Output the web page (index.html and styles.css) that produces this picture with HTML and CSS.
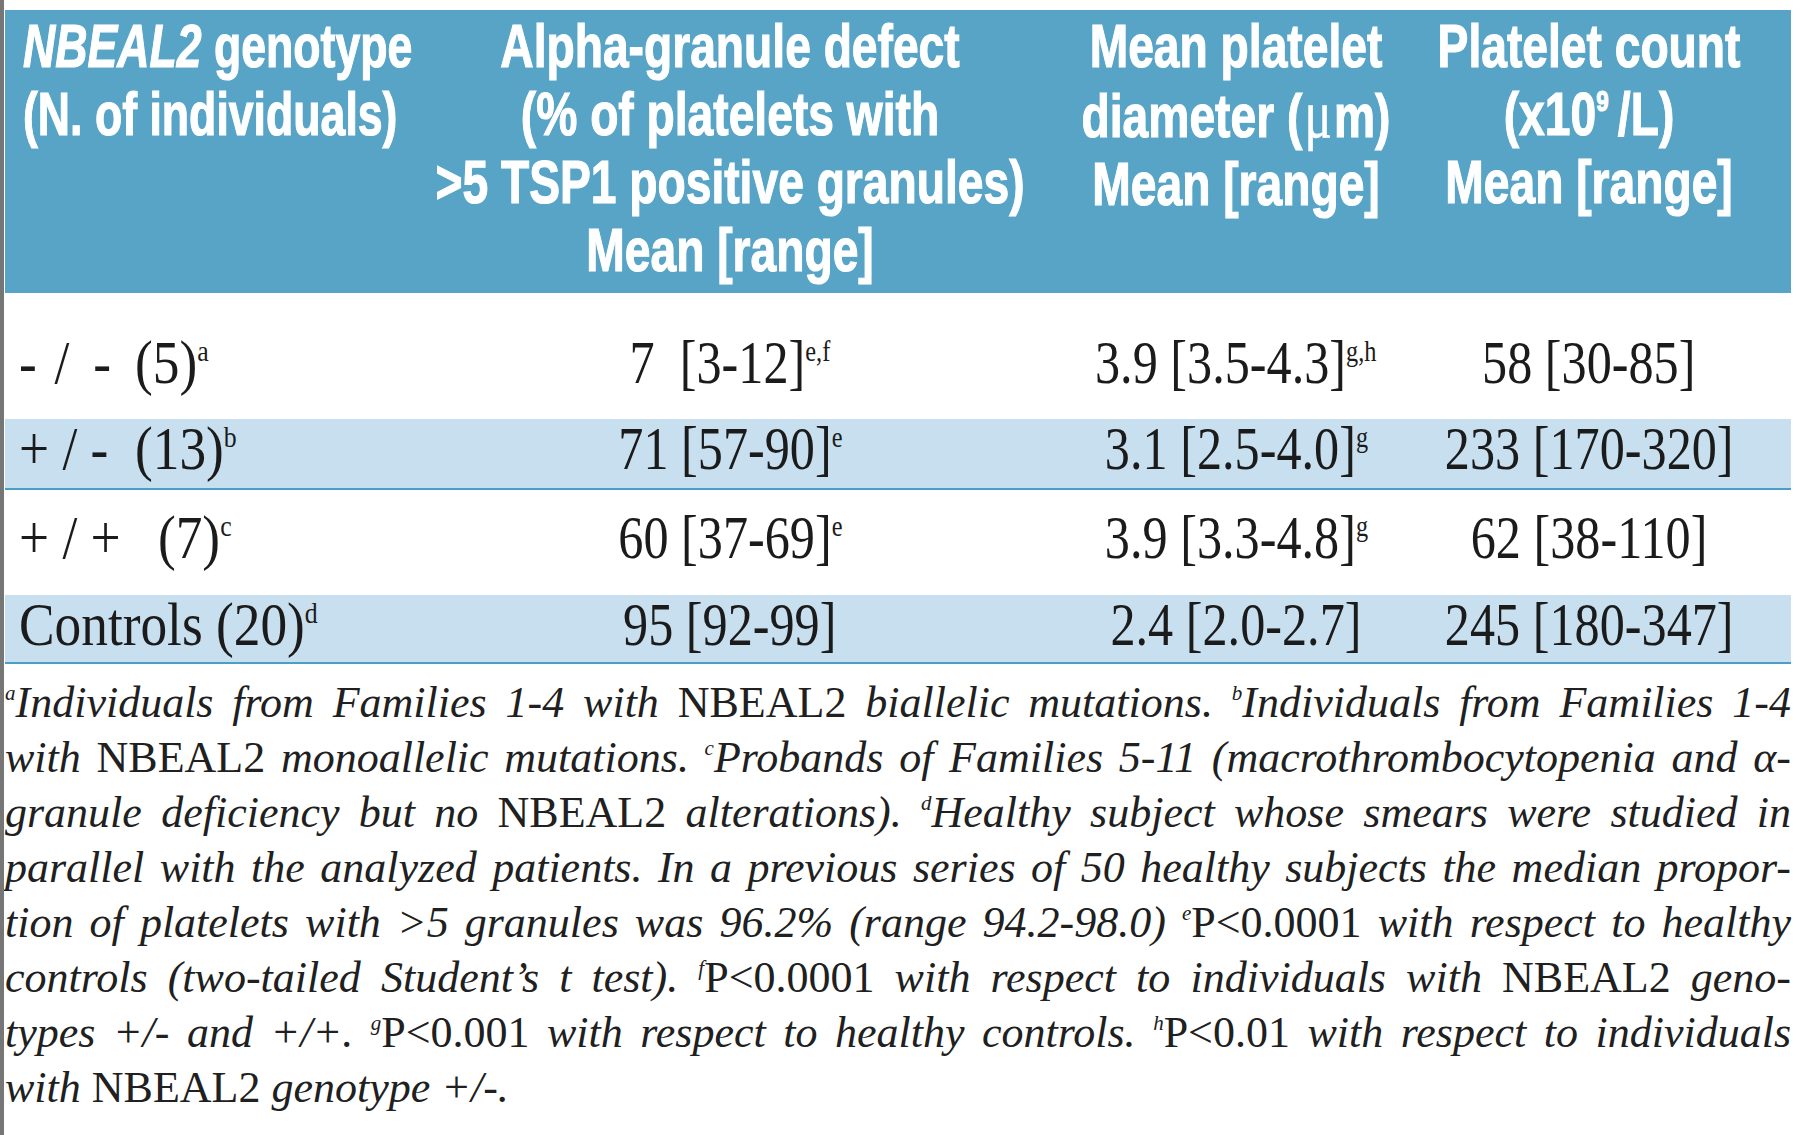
FILE: index.html
```html
<!DOCTYPE html>
<html lang="en">
<head>
<meta charset="utf-8">
<title>NBEAL2 genotype table</title>
<link rel="stylesheet" href="styles.css">
</head>
<body>
<div class="page">
  <div class="tbl">
    <div class="row head">
      <div class="cell c1"><div class="sq"><span><i>NBEAL2</i> genotype</span><span>(N. of individuals)</span></div></div>
      <div class="cell"><div class="sq"><span>Alpha-granule defect</span><span>(% of platelets with</span><span>&gt;5 TSP1 positive granules)</span><span>Mean [range]</span></div></div>
      <div class="cell"><div class="sq"><span>Mean platelet</span><span>diameter (<span class="mu">&mu;</span>m)</span><span>Mean [range]</span></div></div>
      <div class="cell"><div class="sq"><span>Platelet count</span><span>(x10<sup>9</sup>&thinsp;/L)</span><span>Mean [range]</span></div></div>
    </div>
    <div class="row body r1">
      <div class="cell c1"><span>-&nbsp;&#8202;/&nbsp;&thinsp;-&nbsp;&thinsp;(5)<sup>a</sup></span></div>
      <div class="cell"><span>7&nbsp;&nbsp;[3-12]<sup>e,f</sup></span></div>
      <div class="cell"><span>3.9 [3.5-4.3]<sup>g,h</sup></span></div>
      <div class="cell"><span>58 [30-85]</span></div>
    </div>
    <div class="row body r2 alt">
      <div class="cell c1"><span>+&nbsp;/&nbsp;-&nbsp;&nbsp;(13)<sup>b</sup></span></div>
      <div class="cell"><span>71 [57-90]<sup>e</sup></span></div>
      <div class="cell"><span>3.1 [2.5-4.0]<sup>g</sup></span></div>
      <div class="cell"><span>233 [170-320]</span></div>
    </div>
    <div class="row body r3">
      <div class="cell c1"><span>+&nbsp;/&nbsp;+&nbsp;&nbsp;&thinsp;(7)<sup>c</sup></span></div>
      <div class="cell"><span>60 [37-69]<sup>e</sup></span></div>
      <div class="cell"><span>3.9 [3.3-4.8]<sup>g</sup></span></div>
      <div class="cell"><span>62 [38-110]</span></div>
    </div>
    <div class="row body r4 alt">
      <div class="cell c1"><span>Controls (20)<sup>d</sup></span></div>
      <div class="cell"><span>95 [92-99]</span></div>
      <div class="cell"><span>2.4 [2.0-2.7]</span></div>
      <div class="cell"><span>245 [180-347]</span></div>
    </div>
  </div>
  <div class="notes">
    <div class="ln"><sup>a</sup>Individuals from Families 1-4 with <span class="r">NBEAL2</span> biallelic mutations. <sup>b</sup>Individuals from Families 1-4</div>
    <div class="ln">with <span class="r">NBEAL2</span> monoallelic mutations. <sup>c</sup>Probands of Families 5-11 (macrothrombocytopenia and &alpha;-</div>
    <div class="ln">granule deficiency but no <span class="r">NBEAL2</span> alterations). <sup>d</sup>Healthy subject whose smears were studied in</div>
    <div class="ln">parallel with the analyzed patients. In a previous series of 50 healthy subjects the median propor-</div>
    <div class="ln">tion of platelets with &gt;5 granules was 96.2% (range 94.2-98.0) <sup>e</sup><span class="r">P&lt;0.0001</span> with respect to healthy</div>
    <div class="ln">controls (two-tailed Student&rsquo;s t test). <sup>f</sup><span class="r">P&lt;0.0001</span> with respect to individuals with <span class="r">NBEAL2</span> geno-</div>
    <div class="ln">types +/- and +/+. <sup>g</sup><span class="r">P&lt;0.001</span> with respect to healthy controls. <sup>h</sup><span class="r">P&lt;0.01</span> with respect to individuals</div>
    <div class="ln end">with <span class="r">NBEAL2</span> genotype +/-.</div>
  </div>
</div>
</body>
</html>
```
FILE: styles.css
```css
html, body {
  margin: 0;
  padding: 0;
  background: #ffffff;
}

.page {
  box-sizing: border-box;
  height: 1135px;
  border-left: 4px solid #767676;
  padding: 10px 9px 0 1px;
  overflow: hidden;
}

.row {
  display: grid;
  grid-template-columns: 405px 640px 372px 334px 1fr;
  box-sizing: border-box;
}

/* ---------- header ---------- */
.head {
  height: 283px;
  padding-top: 2px;
  background: #57a4c6;
  color: #ffffff;
  font: bold 62px/68px "Liberation Sans", Arial, sans-serif;
}

.head .sq {
  display: flex;
  flex-direction: column;
  align-items: center;
  white-space: nowrap;
  transform: scaleX(0.745);
  -webkit-text-stroke: 1.2px #ffffff;
}

.head .c1 {
  padding-left: 18px;
}

.head .c1 .sq {
  align-items: flex-start;
  transform-origin: left center;
  transform: scaleX(0.72);
}

.head sup {
  font-size: 30px;
  line-height: 0;
  vertical-align: 24px;
}

.head .mu {
  font-family: "Liberation Serif", serif;
  font-weight: normal;
  font-size: 68px;
  padding: 0 3px;
  -webkit-text-stroke: 0.6px #ffffff;
}

/* ---------- body rows ---------- */
.body {
  font: 62px/58px "Liberation Serif", "Times New Roman", serif;
  color: #1b1b1b;
}

.body .cell {
  display: flex;
  justify-content: center;
}

.body .cell > span {
  display: inline-block;
  white-space: nowrap;
  transform: scaleX(0.81);
}

.body .c1 {
  justify-content: flex-start;
  padding-left: 14px;
}

.body .c1 > span {
  transform-origin: left center;
  transform: scaleX(0.86);
}

.body sup {
  font-size: 30px;
  line-height: 0;
  vertical-align: 22px;
}

.alt {
  background: #c7dfee;
  border-bottom: 2px solid #4b9fc6;
}

.r1 {
  height: 126px;
  padding-top: 40px;
}

.r2 {
  height: 71px;
  padding-top: 0;
}

.r3 {
  height: 105px;
  padding-top: 18px;
}

.r4 {
  height: 69px;
  padding-top: 0;
}

/* ---------- footnotes ---------- */
.notes {
  margin-top: 11px;
  font: italic 44px/55px "Liberation Serif", "Times New Roman", serif;
  color: #202020;
}

.ln {
  white-space: nowrap;
  text-align: justify;
  text-align-last: justify;
}

.ln.end {
  text-align-last: left;
}

.notes .r {
  font-style: normal;
}

.notes sup {
  font-size: 21px;
  line-height: 0;
  vertical-align: 17px;
}
```
